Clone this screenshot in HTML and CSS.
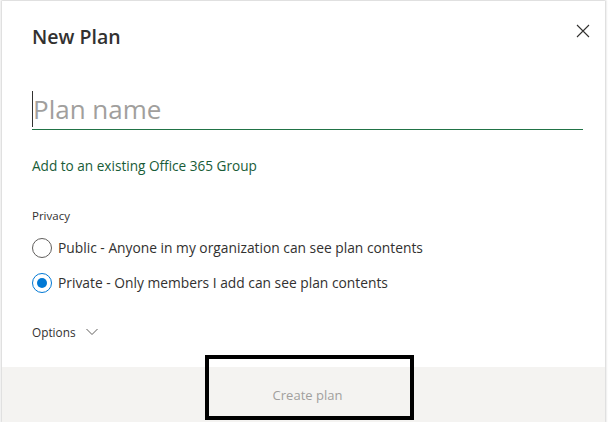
FILE: index.html
```html
<!DOCTYPE html>
<html lang="en">
<head>
    <meta charset="UTF-8">
    <meta name="viewport" content="width=device-width, initial-scale=1.0">
    <title>New Plan</title>
    <link rel="stylesheet" href="styles.css">
</head>
<body>
    <div class="dialog">
        <div class="dialog-header">
            <h1 class="dialog-title">New Plan</h1>
            <button class="close-button" aria-label="Close">
                <svg width="14" height="14" viewBox="0 0 14 14">
                    <path d="M1 1 L13 13 M13 1 L1 13" stroke="#323130" stroke-width="1.1" fill="none"/>
                </svg>
            </button>
        </div>

        <div class="dialog-body">
            <div class="name-field">
                <span class="caret"></span>
                <input type="text" class="plan-name" placeholder="Plan name">
            </div>

            <a class="group-link" href="#">Add to an existing Office 365 Group</a>

            <div class="privacy">
                <div class="privacy-label">Privacy</div>
                <label class="radio-row">
                    <span class="radio"></span>
                    <span>Public - Anyone in my organization can see plan contents</span>
                </label>
                <label class="radio-row">
                    <span class="radio checked"></span>
                    <span>Private - Only members I add can see plan contents</span>
                </label>
            </div>

            <div class="options">
                <span>Options</span>
                <svg width="12" height="8" viewBox="0 0 12 8">
                    <path d="M0.5 1 L6 6.5 L11.5 1" stroke="#605e5c" stroke-width="1" fill="none"/>
                </svg>
            </div>
        </div>

        <div class="dialog-footer">
            <button class="create-button" disabled>Create plan</button>
        </div>

        <div class="highlight-box"></div>
    </div>
</body>
</html>
```

FILE: styles.css
```css
body, html {
    margin: 0;
    padding: 0;
    background-color: #ffffff;
    font-family: 'Open Sans', 'Noto Sans', sans-serif;
    color: #323130;
    overflow: hidden;
}
.dialog {
    position: relative;
    margin: 1px 0 0 2px;
    width: 603px;
    height: 421px;
    background-color: #ffffff;
    box-shadow: 0 0 2px 1px rgba(0, 0, 0, 0.18);
    display: flex;
    flex-direction: column;
}
.dialog-header {
    display: flex;
    justify-content: space-between;
    align-items: flex-start;
    padding: 22px 15px 0 30px;
}
.dialog-title {
    margin: 0;
    font-size: 19.5px;
    font-weight: 600;
    line-height: 28px;
    color: #323130;
}
.close-button {
    background: none;
    border: none;
    padding: 0;
    margin-top: 1px;
    width: 14px;
    height: 14px;
    cursor: pointer;
}
.dialog-body {
    padding: 0 0 0 30px;
    display: flex;
    flex-direction: column;
    align-items: flex-start;
}
.name-field {
    position: relative;
    margin-top: 38px;
    width: 551px;
    border-bottom: 1px solid #217346;
}
.caret {
    position: absolute;
    left: 0;
    top: 2px;
    width: 1px;
    height: 36px;
    background-color: #323130;
}
.plan-name {
    display: block;
    width: 100%;
    border: none;
    outline: none;
    padding: 0 0 0 1px;
    height: 40px;
    font-family: inherit;
    font-size: 26px;
    font-weight: 400;
    color: #323130;
    background: transparent;
}
.plan-name::placeholder {
    color: #a19f9d;
}
.group-link {
    margin-top: 26px;
    font-size: 13.6px;
    font-weight: 500;
    color: #185c37;
    text-decoration: none;
    line-height: 20px;
}
.privacy {
    margin-top: 32px;
}
.privacy-label {
    font-size: 11.5px;
    line-height: 16px;
    margin-bottom: 14px;
}
.radio-row {
    display: flex;
    align-items: center;
    gap: 6px;
    font-size: 13.8px;
    line-height: 20px;
    margin-bottom: 15px;
    cursor: pointer;
}
.radio {
    box-sizing: border-box;
    width: 20px;
    height: 20px;
    border: 1px solid #605e5c;
    border-radius: 50%;
    position: relative;
}
.radio.checked {
    border-color: #0078d4;
}
.radio.checked::after {
    content: "";
    position: absolute;
    left: 4px;
    top: 4px;
    width: 10px;
    height: 10px;
    border-radius: 50%;
    background-color: #0078d4;
}
.options {
    margin-top: 16px;
    display: flex;
    align-items: center;
    gap: 10px;
    font-size: 11.8px;
}
.dialog-footer {
    margin-top: auto;
    height: 55px;
    background-color: #f4f3f1;
    display: flex;
    align-items: center;
    justify-content: center;
    padding-left: 8px;
}
.create-button {
    background: none;
    border: none;
    font-family: inherit;
    font-size: 13px;
    color: #a19f9d;
    padding: 0;
}
.highlight-box {
    position: absolute;
    left: 203px;
    top: 354px;
    width: 201px;
    height: 57px;
    border: 4px solid #000000;
}
```
